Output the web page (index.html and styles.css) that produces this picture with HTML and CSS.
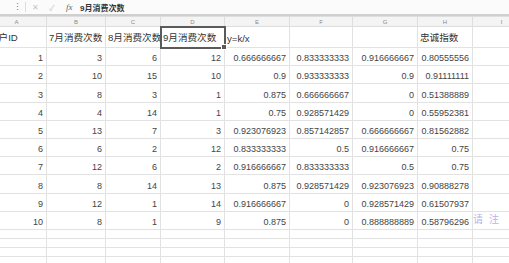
FILE: index.html
```html
<!DOCTYPE html>
<html lang="zh">
<head>
    <meta charset="UTF-8">
    <meta name="viewport" content="width=device-width, initial-scale=1.0">
    <title>消费次数</title>
    <link rel="stylesheet" href="styles.css">
</head>
<body>
    <div class="formula-bar">
        <span class="stepper">&#8942;</span>
        <span class="fb-sep"></span>
        <span class="fb-icon">&#10005;</span>
        <span class="fb-icon">&#10003;</span>
        <span class="fx">fx</span>
        <span class="fb-text">9月消费次数</span>
    </div>

    <div class="sheet-wrap">
        <table class="sheet">
            <colgroup>
                <col class="c-a"><col class="c-b"><col class="c-c"><col class="c-d">
                <col class="c-e"><col class="c-f"><col class="c-g"><col class="c-h"><col class="c-i">
            </colgroup>
            <tr class="col-head">
                <th>A</th><th>B</th><th>C</th><th>D</th><th>E</th><th>F</th><th>G</th><th>H</th><th>I</th>
            </tr>
            <tr class="title-row">
                <td class="txt">用户ID</td>
                <td class="txt">7月消费次数</td>
                <td class="txt">8月消费次数</td>
                <td class="txt selected">9月消费次数<span class="handle"></span></td>
                <td class="txt">y=k/x</td>
                <td></td>
                <td></td>
                <td class="txt">忠诚指数</td>
                <td></td>
            </tr>
            <tr><td>1</td><td>3</td><td>6</td><td>12</td><td>0.666666667</td><td>0.833333333</td><td>0.916666667</td><td>0.80555556</td><td></td></tr>
            <tr><td>2</td><td>10</td><td>15</td><td>10</td><td>0.9</td><td>0.933333333</td><td>0.9</td><td>0.91111111</td><td></td></tr>
            <tr><td>3</td><td>8</td><td>3</td><td>1</td><td>0.875</td><td>0.666666667</td><td>0</td><td>0.51388889</td><td></td></tr>
            <tr><td>4</td><td>4</td><td>14</td><td>1</td><td>0.75</td><td>0.928571429</td><td>0</td><td>0.55952381</td><td></td></tr>
            <tr><td>5</td><td>13</td><td>7</td><td>3</td><td>0.923076923</td><td>0.857142857</td><td>0.666666667</td><td>0.81562882</td><td></td></tr>
            <tr><td>6</td><td>6</td><td>2</td><td>12</td><td>0.833333333</td><td>0.5</td><td>0.916666667</td><td>0.75</td><td></td></tr>
            <tr><td>7</td><td>12</td><td>6</td><td>2</td><td>0.916666667</td><td>0.833333333</td><td>0.5</td><td>0.75</td><td></td></tr>
            <tr><td>8</td><td>8</td><td>14</td><td>13</td><td>0.875</td><td>0.928571429</td><td>0.923076923</td><td>0.90888278</td><td></td></tr>
            <tr><td>9</td><td>12</td><td>1</td><td>14</td><td>0.916666667</td><td>0</td><td>0.928571429</td><td>0.61507937</td><td></td></tr>
            <tr><td>10</td><td>8</td><td>1</td><td>9</td><td>0.875</td><td>0</td><td>0.888888889</td><td>0.58796296</td><td class="note-cell"><span class="watermark">请注</span></td></tr>
            <tr class="thin"><td></td><td></td><td></td><td></td><td></td><td></td><td></td><td></td><td></td></tr>
            <tr class="thin"><td></td><td></td><td></td><td></td><td></td><td></td><td></td><td></td><td></td></tr>
            <tr class="thin"><td></td><td></td><td></td><td></td><td></td><td></td><td></td><td></td><td></td></tr>
            <tr class="thin"><td></td><td></td><td></td><td></td><td></td><td></td><td></td><td></td><td></td></tr>
        </table>
    </div>
</body>
</html>
```

FILE: styles.css
```css
body {
    margin: 0;
    overflow: hidden;
    background: #fff;
    font-family: "Liberation Sans", "Noto Sans CJK SC", sans-serif;
    color: #333;
}
.formula-bar {
    height: 14px;
    display: flex;
    align-items: center;
    background: #fbfbfb;
    border-bottom: 2px solid #cfcfcf;
    font-size: 8px;
}
.stepper {
    width: 8px;
    margin-left: 13px;
    color: #777;
    font-size: 9px;
    text-align: center;
}
.fb-sep {
    width: 1px;
    height: 10px;
    background: #ddd;
    margin: 0 6px 0 4px;
}
.fb-icon {
    width: 17px;
    color: #c4c4c4;
    font-size: 8px;
}
.fx {
    font-family: "Liberation Serif", serif;
    font-style: italic;
    font-size: 9px;
    color: #666;
    width: 14px;
}
.fb-text {
    font-size: 8px;
    font-weight: bold;
    color: #333;
}
.sheet-wrap {
    margin-left: -14px;
}
.sheet {
    border-collapse: collapse;
    table-layout: fixed;
    width: 544px;
}
.c-a { width: 60px; }
.c-b { width: 59px; }
.c-c { width: 55px; }
.c-d { width: 64px; }
.c-e { width: 65px; }
.c-f { width: 63px; }
.c-g { width: 65px; }
.c-h { width: 55px; }
.c-i { width: 58px; }
.sheet th,
.sheet td {
    border: 1px solid #e2e2e2;
    padding: 0 3px 2px 2px;
    white-space: nowrap;
    overflow: visible;
}
.col-head th {
    height: 9px;
    background: #f4f4f4;
    border-color: #dedede;
    color: #8a8a8a;
    font-weight: normal;
    font-size: 6px;
    padding: 0;
    text-align: center;
    vertical-align: middle;
}
.sheet td {
    height: 15.2px;
    font-size: 9px;
    text-align: right;
    vertical-align: bottom;
    color: #444;
}
.title-row td {
    height: 17px;
    font-size: 9.6px;
    padding-bottom: 3px;
}
.sheet td.txt {
    text-align: left;
    color: #333;
}
.selected {
    position: relative;
    outline: 2px solid #5a5a5a;
    outline-offset: -1px;
}
.handle {
    position: absolute;
    right: -3px;
    bottom: -3px;
    width: 4px;
    height: 4px;
    background: #5a5a5a;
    border: 1px solid #fff;
}
.sheet tr.thin td {
    height: 8px;
    padding: 0;
}
.note-cell {
    position: relative;
}
.watermark {
    position: absolute;
    left: 0;
    bottom: 3px;
    font-size: 10px;
    color: #b8b4ee;
    letter-spacing: 6px;
    text-align: left;
}
```
